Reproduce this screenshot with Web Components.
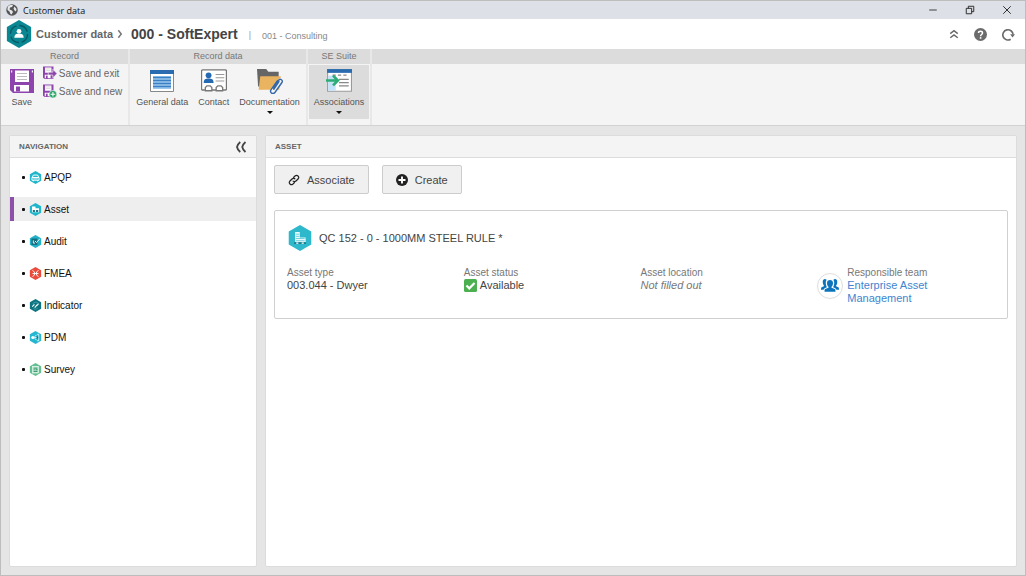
<!DOCTYPE html>
<html lang="en">
<head>
<meta charset="utf-8">
<title>Customer data</title>
<style>
html, body { height: 100%; margin: 0; }
body { font-family: "Liberation Sans", Arial, sans-serif; font-size: 10px; color: #333; background: #e5e5e5; }
</style>
</head>
<body>
<app-window>
  <title-bar slot="title">Customer data</title-bar>
  <record-header slot="header">
    <span slot="section">Customer data</span>
    <span slot="record">000 - SoftExpert</span>
    <span slot="parent">001 - Consulting</span>
  </record-header>
  <ribbon-bar slot="ribbon">
    <ribbon-group label="Record" size="record">
      <ribbon-button icon="save" art="small">Save</ribbon-button>
      <ribbon-stack>
        <ribbon-command icon="save-exit">Save and exit</ribbon-command>
        <ribbon-command icon="save-new">Save and new</ribbon-command>
      </ribbon-stack>
    </ribbon-group>
    <ribbon-group label="Record data" size="data">
      <ribbon-button icon="general" art="small">General data</ribbon-button>
      <ribbon-button icon="contact">Contact</ribbon-button>
      <ribbon-button icon="documents" menu>Documentation</ribbon-button>
    </ribbon-group>
    <ribbon-group label="SE Suite" size="suite">
      <ribbon-button icon="associations" menu active>Associations</ribbon-button>
    </ribbon-group>
    <ribbon-group size="rest"></ribbon-group>
  </ribbon-bar>
  <content-panel slot="side" heading="NAVIGATION" collapsible>
    <nav-list>
      <nav-item icon="apqp">APQP</nav-item>
      <nav-item icon="asset" selected>Asset</nav-item>
      <nav-item icon="audit">Audit</nav-item>
      <nav-item icon="fmea">FMEA</nav-item>
      <nav-item icon="indicator">Indicator</nav-item>
      <nav-item icon="pdm">PDM</nav-item>
      <nav-item icon="survey">Survey</nav-item>
    </nav-list>
  </content-panel>
  <content-panel slot="main" heading="ASSET">
    <asset-view>
      <tool-button slot="tools" icon="link">Associate</tool-button>
      <tool-button slot="tools" icon="plus">Create</tool-button>
      <asset-card>
        <span slot="name">QC 152 - 0 - 1000MM STEEL RULE *</span>
        <asset-field label="Asset type">003.044 - Dwyer</asset-field>
        <asset-field label="Asset status" mark="check">Available</asset-field>
        <asset-field label="Asset location" empty>Not filled out</asset-field>
        <asset-field label="Responsible team" avatar="team" link>Enterprise Asset Management</asset-field>
      </asset-card>
    </asset-view>
  </content-panel>
</app-window>

<script>
const hex = (fill, inner) =>
  `<path fill="${fill}" d="M12 0 22.4 6v12L12 24 1.6 18V6z"/>${inner}`;

const floppy = `<path fill="#8e44ad" d="M0 0h24v24H3l-3-3z"/><path fill="#fff" d="M5 1.5h14V13H5z"/><path fill="#f4f4f4" d="M1 1.5h1.2v2H1zM21.8 1.5H23v2h-1.2z"/><path stroke="#bbb" d="M7 4.5h10M7 7.5h10M7 10.5h10"/><path fill="#fff" d="M4 16h15v6.5H4z"/><path fill="#8e44ad" d="M6 17.5h4v5H6z"/>`;
const smallFloppy = `<path fill="#8e44ad" d="M0 1h18v21H2l-2-2z"/><path fill="#fff" d="M3.500 2.500h11v9h-11z"/><path stroke="#bbb" d="M5 5h8M5 8h8"/><path fill="#fff" d="M3 15h10v5.500H3z"/><path fill="#8e44ad" d="M5 16.500h3V22H5z"/>`;

const ICONS = {
  globe: `<circle cx="12" cy="12" r="11.5" fill="#555"/><path fill="#e6e8ec" d="M4 5c3-3 8-3.500 10-2l-2 3-4 1-1 4 5 2 2 3-3 5c-2 0-3-4-4-6l-4-3c0-3 0-5 1-7zM17 5l4 5-1 5-3-2-2-4z"/>`,
  profile: hex('#0b8793', `<circle cx="12" cy="12" r="7.300" fill="none" stroke="#075a63" stroke-width="1.200" stroke-dasharray="9 2.500"/><circle cx="12" cy="9.700" r="2" fill="#fff"/><path fill="#fff" d="M8 15.200c0-2.500 1.200-3.200 2.700-3.400h2.600c1.500.2 2.700.9 2.700 3.400z"/>`),
  min: `<path fill="none" stroke="#222" stroke-width="2" d="M3 12h18"/>`,
  restore: `<g fill="none" stroke="#222" stroke-width="2.200"><path d="M3 8h13v13H3zM8 8V3h13v13h-5"/></g>`,
  close: `<path fill="none" stroke="#222" stroke-width="2.200" d="m3 3 18 18M21 3 3 21"/>`,
  up: `<path fill="none" stroke="#666" stroke-width="3.400" d="m3 11 9-7 9 7M3 21l9-7 9 7"/>`,
  help: `<circle cx="12" cy="12" r="12" fill="#6b6b6b"/><path fill="none" stroke="#fff" stroke-width="2.800" d="M8.300 9.200c.2-4.200 7.400-4.200 7.400 0 0 2.800-3.500 2.800-3.500 5.800"/><circle cx="12.200" cy="18.300" r="1.700" fill="#fff"/>`,
  reload: `<path fill="none" stroke="#6b6b6b" stroke-width="3" d="M16 20.800A9.500 9.500 0 1 1 20.500 12"/><path fill="#6b6b6b" d="M15 11.500h9l-4.500 6z"/>`,
  chevron: `<path fill="none" stroke="#777" stroke-width="3.600" d="m8 3 7 9-7 9"/>`,
  collapse: `<path fill="none" stroke="#444" stroke-width="3.600" d="M10.500 2C6 6 4.500 9 4 12c.5 3 2 6 6.500 10M21 2c-4.500 4-6 7-6.500 10 .5 3 2 6 6.500 10"/>`,
  save: floppy,
  'save-exit': smallFloppy + `<path fill="#8e44ad" stroke="#f4f4f4" stroke-width="1.200" d="M9 10.500h8V5.500l7 7.500-7 7.500v-5H9z"/>`,
  'save-new': smallFloppy + `<circle cx="17" cy="17.500" r="6.500" fill="#27a567" stroke="#f4f4f4"/><path stroke="#fff" stroke-width="1.800" d="M13 17.500h8M17 13.500v8"/>`,
  general: `<path fill="#fff" stroke="#888" d="M.5 1.500h23v21H.5z"/><path fill="#2b6cb0" d="M0 1h24v4H0z"/><path fill="#9cc8ee" d="M3 7h18v13H3z"/><path stroke="#3b7fc4" stroke-width="1.400" d="M3 8.500h18M3 11.500h18M3 14.500h18M3 17.500h18"/>`,
  contact: `<rect x=".5" y="1.800" width="23" height="18.500" rx="1" fill="#fff" stroke="#777" stroke-width="1.200"/><circle cx="7" cy="6.800" r="2.700" fill="#2569b3"/><path fill="#2569b3" d="M2.500 13.800c0-3.200 1.500-4 4.500-4s4.600.8 4.600 4z"/><path stroke="#999" d="M13.500 6h8M13.500 9h8M13.500 12h8"/><path fill="#fff" stroke="#777" stroke-width="1.200" d="M4 21v-3l1.500-1.500h3L10 18v3zM14 21v-3l1.500-1.500h3L20 18v3z"/>`,
  documents: `<path fill="#666" d="M0 1h8.500l2 2.500H20V17H1z"/><path fill="#eab35f" d="M3 7.500h19L20.500 20H1.500z"/><g fill="none" stroke-linecap="round"><path stroke="#f4f4f4" stroke-width="4" d="M15 21 22 11"/><path stroke="#3568a9" stroke-width="1.300" d="m15 18.500 5-7.200c1.500-1.900 4.300 0 3 2.100l-6.300 9c-2 2.600-5.300.2-3.800-2.300l5.600-8c.8-1 2.200 0 1.500 1l-4.500 6.500"/></g>`,
  associations: `<path fill="#fff" stroke="#999" d="M1.500 1.500h22v20h-22z"/><path fill="#2b6cb0" d="M1 1h23v3.500H1z"/><path fill="#c4e3f8" d="M2 7h7v14H2z"/><path stroke="#888" stroke-width="1.200" d="M6 6.500h3M11 6.500h3M16 6.500h3M12 10.500h9M12 13.500h9M12 16.500h9"/><path stroke="#2dac76" stroke-width="2.400" fill="none" d="M0 11.500h10M6.500 7l4.500 4.500L6.500 16"/>`,
  apqp: hex('#1fb6cb', `<path fill="none" stroke="#fff" stroke-width="1.800" d="M6 12 8 7.500h8l2 4.500M5.500 12h13v5h-13zM8 17v2M16 17v2"/><path stroke="#fff" stroke-width="1.500" d="M8 14.500h8"/>`),
  asset: hex('#1fb6cb', `<path fill="#fff" d="M5.500 6.500h6.500v3h6.500V17h-13z"/><path fill="#16758a" d="M7 13h4v3.500H7zM13 13h4v3.500h-4z"/>`),
  audit: hex('#22b2c7', `<path fill="#176e80" d="M4.500 6.500h11v12h-11z"/><path fill="none" stroke="#fff" stroke-width="1.600" d="M8 10v5h3M11 11l3 3 6-7"/>`),
  fmea: hex('#e94b3c', `<path fill="none" stroke="#fff" stroke-width="1.700" d="M6.500 6.500 10 9v6l-3.500 2.500M17.500 6.500 14 9v6l3.500 2.500M6.500 12h11"/>`),
  indicator: hex('#0b7480', `<path fill="none" stroke="#fff" stroke-width="2" d="m6 14 4-4M10.500 16l5-5.500M15 12l2.500-3.500"/><path fill="none" stroke="#76b8bf" d="M7 9c3-4 8-4 11 0M8 18c2 1 6 1 8-1"/>`),
  pdm: hex('#25b7cf', `<circle cx="7" cy="12" r="2.800" fill="#fff"/><path fill="none" stroke="#e7fbff" stroke-width="1.500" d="M9 12h6M10 11l4-4M10 13l4 4M15 6h3v12h-3"/><path fill="#11718a" d="M14 10h3v4h-3z"/>`),
  survey: hex('#62bf92', `<rect x="6.500" y="6" width="11" height="12.500" fill="#bfe8d2" stroke="#fff"/><path stroke="#25895a" stroke-width="1.700" d="M8.500 9.500h7M8.500 12.500h2M12 12.500h4M8.500 15.500h7"/>`),
  building: hex('#2db8cc', `<path fill="#e9fafc" d="M7.500 6.500h4.300v5h5.400v4.300H7.500z"/><path stroke="#2db8cc" stroke-width=".6" d="M8.300 8.500h3M8.300 10.500h3M8.300 12.500h8M8.300 14.500h8"/><path stroke="#1a6e80" stroke-width="1.300" d="M6.500 16.700h11"/><path stroke="#fff" stroke-width="1.300" d="M8.500 16.700h2M13.500 16.700h2"/>`),
  link: `<g fill="none" stroke="#222" stroke-width="2.400"><path d="m10.500 7.500 4-4a4.300 4.300 0 0 1 6 6l-4.500 4.500a4.300 4.300 0 0 1-6.500-.5"/><path d="m13.500 16.500-4 4a4.300 4.300 0 0 1-6-6L8 10a4.300 4.300 0 0 1 6.500.5"/></g>`,
  plus: `<circle cx="12" cy="12" r="12" fill="#222"/><path stroke="#fff" stroke-width="3.800" d="M5 12h14M12 5v14"/>`,
  check: `<rect width="24" height="24" rx="3" fill="#4caf50"/><path fill="none" stroke="#fff" stroke-width="4" d="m4.500 12 5.300 5.300L19.500 7.500"/>`,
  team: `<path fill="#0b74bd" d="M8 8.200C8 5 9.500 4 12 4s4 1 4 4.200c0 2-.8 3.700-2 4.800v1.200l4.300 1.800c.8.400 1 1.200 1 3.500H4.700c0-2.300.2-3.100 1-3.500l4.300-1.800V13c-1.200-1.100-2-2.800-2-4.800zM7.500 3.500C5 2 2.300 3 2.300 6.500c0 2 .5 3.500 1.500 4.700v1L1 13.500C0 14 0 15 0 17h3.500c.3-1.500 1-2 4.300-3.500C6.500 11 5.500 6.500 7.500 3.500zM16.500 3.500C19 2 21.700 3 21.700 6.500c0 2-.5 3.500-1.500 4.700v1l2.800 1.300c1 .5 1 1.500 1 3.500h-3.500c-.3-1.500-1-2-4.300-3.500 1.300-2.500 2.300-7 .3-10z"/>`
};

const define = (name, render) => customElements.define(name, class extends HTMLElement {
  constructor() {
    super();
    this.attachShadow({ mode: 'open' });
  }
  connectedCallback() {
    this.shadowRoot.innerHTML = render(this);
  }
});
const BUTTON = `button { appearance: none; border: 0; padding: 0; margin: 0; background: none; font: inherit; color: inherit; cursor: pointer; }`;

define('ui-icon', el => `
  <style>
    :host { display: block; flex: none; width: var(--icon-size, 12px); height: var(--icon-size, 12px); }
    svg { display: block; width: 100%; height: 100%; }
  </style>
  <svg viewBox="0 0 24 24" aria-hidden="true">${ICONS[el.getAttribute('name')] || ''}</svg>`);

define('app-window', () => `
  <style>
    :host { display: flex; flex-direction: column; box-sizing: border-box; min-height: 100vh; border: 1px solid #bdbdbd; background: #e5e5e5; }
    main { flex: 1; display: grid; grid-template-columns: 248px minmax(0, 1fr); gap: 8px; padding: 9px 8px 8px; }
  </style>
  <slot name="title"></slot>
  <slot name="header"></slot>
  <slot name="ribbon"></slot>
  <main><slot name="side"></slot><slot name="main"></slot></main>`);

define('title-bar', () => `
  <style>
    :host { display: flex; align-items: center; height: 18px; padding: 0 13px 0 5px; background: #dde0e6; color: #111; font: 9px "Open Sans", sans-serif; }
    ${BUTTON}
    .name { flex: 1; margin-left: 5px; }
    .controls { display: flex; gap: 27px; }
    ui-icon { --icon-size: 10px; }
    .globe { --icon-size: 12px; }
  </style>
  <ui-icon class="globe" name="globe"></ui-icon>
  <span class="name"><slot></slot></span>
  <div class="controls">
    <button aria-label="Minimize"><ui-icon name="min"></ui-icon></button>
    <button aria-label="Restore"><ui-icon name="restore"></ui-icon></button>
    <button aria-label="Close"><ui-icon name="close"></ui-icon></button>
  </div>`);

define('record-header', () => `
  <style>
    :host { display: flex; align-items: center; height: 30px; padding: 0 10px 0 4px; background: #fff; color: #666; }
    ${BUTTON}
    .logo { --icon-size: 28px; }
    .section { margin-left: 3px; font-size: 11px; font-weight: bold; }
    .chevron { --icon-size: 10px; margin: 0 6px 0 2px; }
    .record { font-size: 14px; font-weight: bold; color: #444; }
    .bar { margin: 2px 11px 0; color: #999; font-size: 9px; }
    .parent { flex: 1; margin-top: 3px; font-size: 9px; color: #888; }
    .actions { display: flex; align-items: center; gap: 15px; }
    .up { --icon-size: 10px; }
    .actions ui-icon:not(.up) { --icon-size: 13px; }
  </style>
  <ui-icon class="logo" name="profile"></ui-icon>
  <span class="section"><slot name="section"></slot></span>
  <ui-icon class="chevron" name="chevron"></ui-icon>
  <span class="record"><slot name="record"></slot></span>
  <span class="bar">|</span>
  <span class="parent"><slot name="parent"></slot></span>
  <div class="actions">
    <button aria-label="Hide toolbar"><ui-icon class="up" name="up"></ui-icon></button>
    <button aria-label="Help"><ui-icon name="help"></ui-icon></button>
    <button aria-label="Refresh"><ui-icon name="reload"></ui-icon></button>
  </div>`);

define('ribbon-bar', () => `
  <style>
    :host { display: flex; gap: 2px; height: 76px; background: #e8e8e8; border-bottom: 1px solid #d2d2d2; }
  </style>
  <slot></slot>`);

define('ribbon-group', el => `
  <style>
    :host { display: flex; flex-direction: column; background: #f4f4f4; flex: none; }
    :host([size="record"]) { width: 127px; }
    :host([size="data"]) { width: 176px; }
    :host([size="suite"]) { width: 62px; }
    :host([size="rest"]) { flex: 1; }
    .label { height: 15px; background: #dcdcdc; color: #777; font-size: 9px; line-height: 15px; text-align: center; }
    .items { display: flex; justify-content: center; padding-top: 1px; }
  </style>
  <div class="label">${el.getAttribute('label') || ''}</div>
  <div class="items"><slot></slot></div>`);

define('ribbon-button', el => `
  <style>
    :host { display: block; flex: none; color: #555; font-size: 9px; --icon-size: 26px; }
    :host([art="small"]) { --icon-size: 24px; }
    ${BUTTON}
    button { display: flex; flex-direction: column; align-items: center; box-sizing: border-box; height: 54px; padding: 3px 5px 0; }
    :host([active]) button { background: #dcdcdc; }
    .art { display: grid; place-items: center; height: 26px; }
    .text { margin-top: 2px; line-height: 12px; }
    .arrow { margin-top: 3px; border: 3px solid transparent; border-top-color: #111; border-bottom: 0; }
  </style>
  <button ${el.hasAttribute('menu') ? 'aria-haspopup="menu"' : ''}>
    <span class="art"><ui-icon name="${el.getAttribute('icon')}"></ui-icon></span>
    <span class="text"><slot></slot></span>
    ${el.hasAttribute('menu') ? '<span class="arrow"></span>' : ''}
  </button>`);

define('ribbon-stack', () => `
  <style>
    :host { display: flex; flex-direction: column; gap: 4px; padding: 1px 2px 0 4px; }
  </style>
  <slot></slot>`);

define('ribbon-command', el => `
  <style>
    :host { display: block; color: #666; font-size: 10px; --icon-size: 14px; }
    ${BUTTON}
    button { display: flex; align-items: center; gap: 2px; height: 14px; white-space: nowrap; }
  </style>
  <button><ui-icon name="${el.getAttribute('icon')}"></ui-icon><slot></slot></button>`);

define('content-panel', el => `
  <style>
    :host { display: flex; flex-direction: column; background: #fff; border: 1px solid #dcdcdc; border-radius: 2px; min-width: 0; }
    ${BUTTON}
    header { display: flex; align-items: center; justify-content: space-between; height: 21px; padding: 0 9px; background: #f4f4f4; border-bottom: 1px solid #dcdcdc; }
    h2 { margin: 0; font-size: 8px; font-weight: bold; color: #666; }
    ui-icon { --icon-size: 12px; }
  </style>
  <header>
    <h2>${el.getAttribute('heading')}</h2>
    ${el.hasAttribute('collapsible') ? '<button aria-label="Collapse"><ui-icon name="collapse"></ui-icon></button>' : ''}
  </header>
  <slot></slot>`);

define('nav-list', () => `
  <style>
    :host { display: block; }
    nav { display: flex; flex-direction: column; gap: 8px; padding-top: 7px; }
  </style>
  <nav><slot></slot></nav>`);

define('nav-item', el => `
  <style>
    :host { display: block; --icon-size: 13px; }
    a { display: flex; align-items: center; height: 24px; padding-left: 8px; border-left: 4px solid transparent; color: #111; text-decoration: none; font-size: 10px; }
    a::before { content: ""; width: 3px; height: 3px; border-radius: 1px; background: #111; margin-right: 4px; }
    :host([selected]) a { background: #eee; border-left-color: #8e4fa8; }
    span { margin-left: 2px; }
  </style>
  <a href="#${el.getAttribute('icon')}"><ui-icon name="${el.getAttribute('icon')}"></ui-icon><span><slot></slot></span></a>`);

define('asset-view', () => `
  <style>
    :host { display: block; padding: 7px 8px; }
    .tools { display: flex; gap: 13px; margin-bottom: 16px; }
  </style>
  <div class="tools"><slot name="tools"></slot></div>
  <slot></slot>`);

define('tool-button', el => `
  <style>
    :host { display: block; font-size: 11px; color: #444; --icon-size: 12px; }
    button { display: flex; align-items: center; gap: 7px; height: 29px; padding: 0 13px; border: 1px solid #ccc; border-radius: 2px; background: #f0f0f0; color: inherit; font: inherit; cursor: pointer; }
  </style>
  <button><ui-icon name="${el.getAttribute('icon')}"></ui-icon><slot></slot></button>`);

define('asset-card', () => `
  <style>
    :host { display: block; border: 1px solid #d0d0d0; border-radius: 2px; padding: 13px 13px 12px 12px; --icon-size: 26px; }
    .head { display: flex; align-items: center; gap: 6px; height: 28px; font-size: 11px; color: #444; }
    .fields { display: grid; grid-template-columns: repeat(4, 1fr); margin-top: 14px; }
  </style>
  <div class="head"><ui-icon name="building"></ui-icon><slot name="name"></slot></div>
  <div class="fields"><slot></slot></div>`);

define('asset-field', el => {
  const mark = el.getAttribute('mark'), avatar = el.getAttribute('avatar');
  return `
  <style>
    :host { display: flex; align-items: flex-start; gap: 4px; min-height: 40px; font-size: 11px; color: #444; }
    .avatar { flex: none; display: grid; place-items: center; box-sizing: border-box; width: 26px; height: 26px; margin-top: 7px; border: 1px solid #ddd; border-radius: 50%; --icon-size: 18px; }
    .label { font-size: 10px; line-height: 13px; color: #777; }
    .value { display: flex; align-items: center; gap: 3px; line-height: 13px; max-width: 100px; --icon-size: 13px; }
    :host([empty]) .value { font-style: italic; color: #777; }
    a { color: #3d85d0; text-decoration: none; }
  </style>
  ${avatar ? `<span class="avatar"><ui-icon name="${avatar}"></ui-icon></span>` : ''}
  <div>
    <div class="label">${el.getAttribute('label')}</div>
    <div class="value">${mark ? `<ui-icon name="${mark}"></ui-icon>` : ''}${el.hasAttribute('link') ? '<a href="#team"><slot></slot></a>' : '<span><slot></slot></span>'}</div>
  </div>`;
});
</script>
</body>
</html>
